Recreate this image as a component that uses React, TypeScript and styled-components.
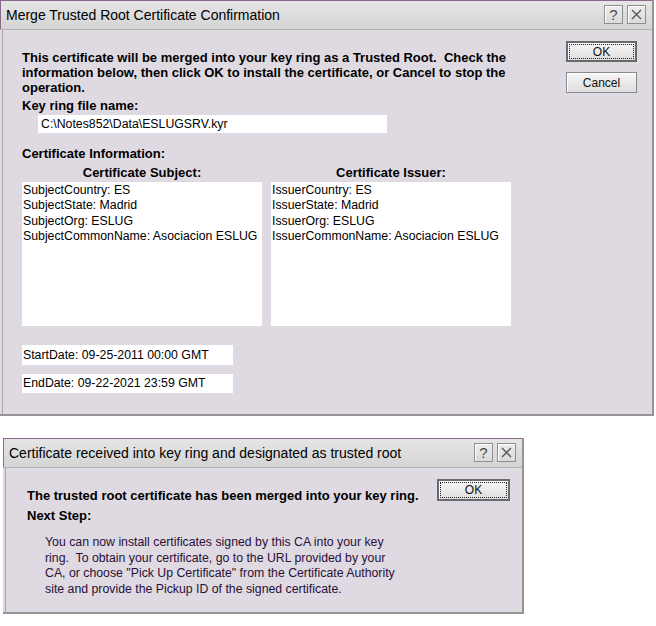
import styled, { createGlobalStyle } from 'styled-components';

const GlobalStyle = createGlobalStyle`
  html, body {
    margin: 0;
    padding: 0;
    background: #ffffff;
  }
  body {
    font-family: "Liberation Sans", Arial, sans-serif;
    color: #000;
  }
`;

const Page = styled.div`
  display: flex;
  flex-direction: column;
  align-items: flex-start;
  gap: 22px;
  width: 656px;
  height: 626px;
  overflow: hidden;
`;

const Window = styled.div<{ $width: number; $indent?: number }>`
  width: ${(p) => p.$width}px;
  margin-left: ${(p) => p.$indent || 0}px;
  display: flex;
  flex-direction: column;
  background: #dfdae1;
  border-right: 2px solid #959595;
  border-bottom: 2px solid #959595;
  box-sizing: border-box;
`;

const TitleBar = styled.div<{ $height: number }>`
  height: ${(p) => p.$height}px;
  display: flex;
  align-items: center;
  justify-content: space-between;
  padding: 0 6px 0 6px;
  background: linear-gradient(#e6e6e6, #d4d4d4);
  border-bottom: 1px solid #b2b2b2;
  box-shadow: inset 1px 1px 0 #8a6a8a;
`;

const Title = styled.span`
  font-size: 14px;
  color: #000;
  white-space: nowrap;
`;

const CapButtons = styled.div`
  display: flex;
  gap: 4px;
`;

const CapButton = styled.div`
  width: 19px;
  height: 19px;
  box-sizing: border-box;
  border: 1px solid #8e8e8e;
  background: linear-gradient(#ececec, #dadada);
  box-shadow: inset 1px 1px 0 #ffffff;
  display: flex;
  align-items: center;
  justify-content: center;
  font-size: 15px;
  color: #4a4a4a;
  line-height: 1;
`;

const Body = styled.div<{ $padTop: number; $padLeft: number; $padRight: number; $padBottom: number }>`
  display: flex;
  padding: ${(p) => `${p.$padTop}px ${p.$padRight}px ${p.$padBottom}px ${p.$padLeft}px`};
  box-shadow: inset 2px 0 0 #dfdae1, inset 3px 0 0 #a8a6aa;
`;

const Content = styled.div`
  flex: 1;
  display: flex;
  flex-direction: column;
  align-items: flex-start;
`;

const BoldText = styled.div<{ $gap?: number }>`
  font-size: 13px;
  font-weight: bold;
  line-height: 15px;
  margin-top: ${(p) => p.$gap || 0}px;
  white-space: nowrap;
`;

const Field = styled.div<{ $width: number; $height: number; $gap: number; $indent?: number }>`
  width: ${(p) => p.$width}px;
  height: ${(p) => p.$height}px;
  margin-top: ${(p) => p.$gap}px;
  margin-left: ${(p) => p.$indent || 0}px;
  background: #ffffff;
  font-size: 12.3px;
  line-height: ${(p) => p.$height}px;
  padding-left: ${(p) => (p.$indent ? 3 : 1)}px;
  box-sizing: border-box;
  white-space: nowrap;
`;

const Columns = styled.div`
  display: grid;
  grid-template-columns: 240px 240px;
  column-gap: 9px;
  margin-top: 4px;
`;

const ColumnHead = styled.div`
  font-size: 13px;
  font-weight: bold;
  line-height: 15px;
  text-align: center;
  margin-bottom: 2px;
`;

const ListBox = styled.div`
  height: 144px;
  background: #ffffff;
  padding: 1px 0 0 1px;
  box-sizing: border-box;
  font-size: 12.3px;
  line-height: 15.3px;
  white-space: nowrap;
`;

const ButtonColumn = styled.div`
  display: flex;
  flex-direction: column;
  gap: 10px;
`;

const PushButton = styled.div<{ $default?: boolean; $width: number; $height: number }>`
  position: relative;
  width: ${(p) => p.$width}px;
  height: ${(p) => p.$height}px;
  box-sizing: border-box;
  border: ${(p) => (p.$default ? '2px solid #6a6a6a' : '1px solid #8a8a8a')};
  background: linear-gradient(#f6f6f6, #dedede);
  box-shadow: inset 1px 1px 0 #ffffff;
  display: flex;
  align-items: center;
  justify-content: center;
  font-size: 12px;
  color: #111;
  &::after {
    content: '';
    display: ${(p) => (p.$default ? 'block' : 'none')};
    position: absolute;
    inset: 1px;
    border: 1px dotted #222;
  }
`;

const TopRow = styled.div`
  display: flex;
  justify-content: space-between;
  align-items: flex-start;
  width: 100%;
`;

const Paragraph = styled.div`
  margin: 12px 0 0 18px;
  font-size: 12.3px;
  line-height: 15.7px;
  color: #2a0f3a;
  white-space: nowrap;
`;

const CloseGlyph = () => (
  <svg width="11" height="11" viewBox="0 0 11 11">
    <path d="M1 1 L10 10 M10 1 L1 10" stroke="#555" strokeWidth="1.4" />
  </svg>
);

const Caption = ({ title, height }: { title: string; height: number }) => (
  <TitleBar $height={height}>
    <Title>{title}</Title>
    <CapButtons>
      <CapButton>?</CapButton>
      <CapButton>
        <CloseGlyph />
      </CapButton>
    </CapButtons>
  </TitleBar>
);

const subject = [
  'SubjectCountry: ES',
  'SubjectState: Madrid',
  'SubjectOrg: ESLUG',
  'SubjectCommonName: Asociacion ESLUG'
];

const issuer = [
  'IssuerCountry: ES',
  'IssuerState: Madrid',
  'IssuerOrg: ESLUG',
  'IssuerCommonName: Asociacion ESLUG'
];

export default function App() {
  return (
    <Page>
      <GlobalStyle />
      <Window $width={654}>
        <Caption title="Merge Trusted Root Certificate Confirmation" height={29} />
        <Body $padTop={20} $padLeft={22} $padRight={15} $padBottom={21}>
          <Content>
            <BoldText>
              This certificate will be merged into your key ring as a Trusted Root.&nbsp; Check the
              <br />
              information below, then click OK to install the certificate, or Cancel to stop the
              <br />
              operation.
            </BoldText>
            <BoldText $gap={3}>Key ring file name:</BoldText>
            <Field $width={349} $height={18} $gap={2} $indent={16}>
              C:\Notes852\Data\ESLUGSRV.kyr
            </Field>
            <BoldText $gap={13}>Certificate Information:</BoldText>
            <Columns>
              <div>
                <ColumnHead>Certificate Subject:</ColumnHead>
                <ListBox>
                  {subject.map((line) => (
                    <div key={line}>{line}</div>
                  ))}
                </ListBox>
              </div>
              <div>
                <ColumnHead>Certificate Issuer:</ColumnHead>
                <ListBox>
                  {issuer.map((line) => (
                    <div key={line}>{line}</div>
                  ))}
                </ListBox>
              </div>
            </Columns>
            <Field $width={211} $height={20} $gap={19}>
              StartDate: 09-25-2011 00:00 GMT
            </Field>
            <Field $width={211} $height={19} $gap={9}>
              EndDate: 09-22-2021 23:59 GMT
            </Field>
          </Content>
          <ButtonColumn>
            <PushButton $default $width={71} $height={21} style={{ marginTop: -9 }}>
              OK
            </PushButton>
            <PushButton $width={71} $height={21}>
              Cancel
            </PushButton>
          </ButtonColumn>
        </Body>
      </Window>

      <Window $width={521} $indent={3}>
        <Caption title="Certificate received into key ring and designated as trusted root" height={29} />
        <Body $padTop={11} $padLeft={24} $padRight={12} $padBottom={14}>
          <Content>
            <TopRow>
              <BoldText $gap={9}>The trusted root certificate has been merged into your key ring.</BoldText>
              <PushButton $default $width={73} $height={22}>
                OK
              </PushButton>
            </TopRow>
            <BoldText $gap={5}>Next Step:</BoldText>
            <Paragraph>
              You can now install certificates signed by this CA into your key
              <br />
              ring.&nbsp; To obtain your certificate, go to the URL provided by your
              <br />
              CA, or choose "Pick Up Certificate" from the Certificate Authority
              <br />
              site and provide the Pickup ID of the signed certificate.
            </Paragraph>
          </Content>
        </Body>
      </Window>
    </Page>
  );
}
